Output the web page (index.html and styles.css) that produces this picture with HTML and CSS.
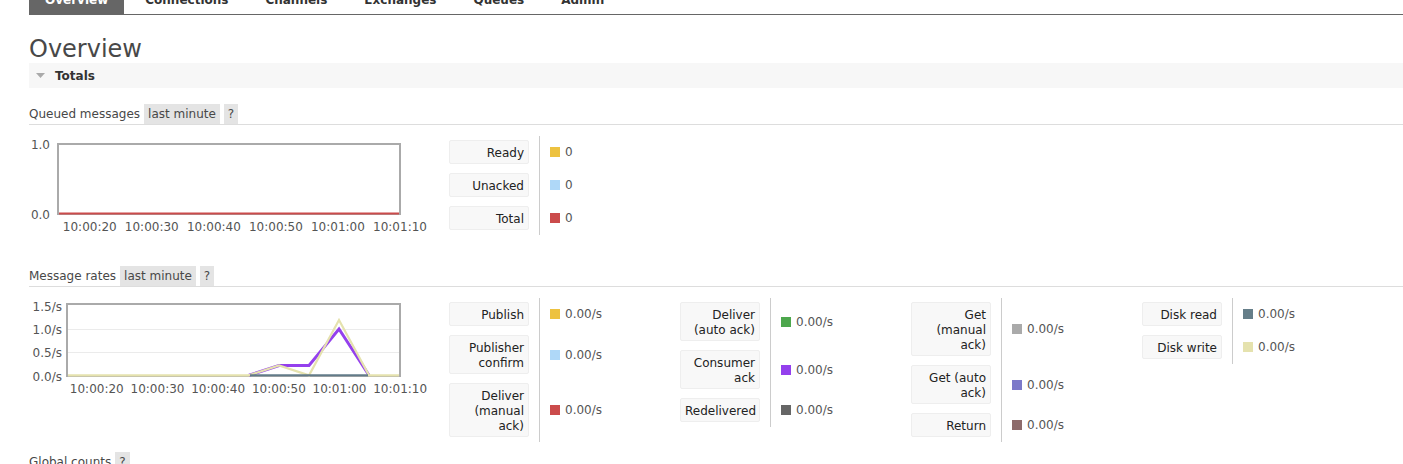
FILE: index.html
```html
<!DOCTYPE html>
<html lang="en">
<head>
<meta charset="utf-8">
<title>RabbitMQ Management - Overview</title>
<link rel="stylesheet" href="styles.css">
</head>
<body>
<div class="page">
  <ul class="nav">
    <li class="tab active">Overview</li>
    <li class="tab">Connections</li>
    <li class="tab">Channels</li>
    <li class="tab">Exchanges</li>
    <li class="tab">Queues</li>
    <li class="tab">Admin</li>
  </ul>

  <h1 class="title">Overview</h1>

  <div class="section-bar">
    <svg class="caret" width="9" height="5" viewBox="0 0 9 5"><polygon points="0,0 9,0 4.5,5" fill="#aaa"/></svg>
    <span>Totals</span>
  </div>

  <div class="block">
    <div class="block-head">
      <span>Queued messages</span>
      <span class="pill">last minute</span>
      <span class="pill">?</span>
    </div>
    <div class="block-row">
      <div class="chart">
        <svg width="420" height="110" viewBox="0 0 420 110">
          <rect x="29" y="8" width="342" height="70" fill="#fff" stroke="#aaa" stroke-width="2"/>
          <line x1="30" y1="77.5" x2="370" y2="77.5" stroke="#cb4b4b" stroke-width="2"/>
          <g class="tick">
            <text x="21" y="12.7" text-anchor="end">1.0</text>
            <text x="21" y="82.7" text-anchor="end">0.0</text>
            <text x="60.8" y="95" text-anchor="middle">10:00:20</text>
            <text x="122.8" y="95" text-anchor="middle">10:00:30</text>
            <text x="184.9" y="95" text-anchor="middle">10:00:40</text>
            <text x="246.9" y="95" text-anchor="middle">10:00:50</text>
            <text x="308.9" y="95" text-anchor="middle">10:01:00</text>
            <text x="371" y="95" text-anchor="middle">10:01:10</text>
          </g>
        </svg>
      </div>
      <div class="legends">
        <div class="legend">
          <div class="lbl">Ready</div><div class="val"><i class="sw c-ready"></i>0</div>
          <div class="lbl">Unacked</div><div class="val"><i class="sw c-unacked"></i>0</div>
          <div class="lbl">Total</div><div class="val"><i class="sw c-total"></i>0</div>
        </div>
      </div>
    </div>
  </div>

  <div class="block">
    <div class="block-head">
      <span>Message rates</span>
      <span class="pill">last minute</span>
      <span class="pill">?</span>
    </div>
    <div class="block-row">
      <div class="chart">
        <svg width="420" height="110" viewBox="0 0 420 110">
          <rect x="38" y="6" width="333" height="72" fill="#fff" stroke="#aaa" stroke-width="2"/>
          <line x1="39" y1="31.5" x2="370" y2="31.5" stroke="#ebebeb" stroke-width="1"/>
          <line x1="39" y1="54.5" x2="370" y2="54.5" stroke="#ebebeb" stroke-width="1"/>
          <polyline points="220,77.3 250,67.5 280,67.5 310,31 340,77.3" fill="none" stroke="#9440ed" stroke-width="3"/>
          <polyline points="39,77.3 220,77.3 250,67.5 280,77.3 310,22 340,77.3 370,77.3" fill="none" stroke="#e5e2ae" stroke-width="2.2"/>
          <line x1="221" y1="77.3" x2="339" y2="77.3" stroke="#627b88" stroke-width="2"/>
          <g class="tick">
            <text x="33" y="13.1" text-anchor="end">1.5/s</text>
            <text x="33" y="36.1" text-anchor="end">1.0/s</text>
            <text x="33" y="58.7" text-anchor="end">0.5/s</text>
            <text x="33" y="82.7" text-anchor="end">0.0/s</text>
            <text x="67.8" y="94.7" text-anchor="middle">10:00:20</text>
            <text x="128.5" y="94.7" text-anchor="middle">10:00:30</text>
            <text x="189.2" y="94.7" text-anchor="middle">10:00:40</text>
            <text x="249.9" y="94.7" text-anchor="middle">10:00:50</text>
            <text x="310.5" y="94.7" text-anchor="middle">10:01:00</text>
            <text x="371.2" y="94.7" text-anchor="middle">10:01:10</text>
          </g>
        </svg>
      </div>
      <div class="legends">
        <div class="legend">
          <div class="lbl">Publish</div><div class="val"><i class="sw c-ready"></i>0.00/s</div>
          <div class="lbl">Publisher<br>confirm</div><div class="val"><i class="sw c-unacked"></i>0.00/s</div>
          <div class="lbl">Deliver<br>(manual<br>ack)</div><div class="val"><i class="sw c-total"></i>0.00/s</div>
        </div>
        <div class="legend">
          <div class="lbl">Deliver<br>(auto ack)</div><div class="val"><i class="sw c-green"></i>0.00/s</div>
          <div class="lbl">Consumer<br>ack</div><div class="val"><i class="sw c-purple"></i>0.00/s</div>
          <div class="lbl">Redelivered</div><div class="val"><i class="sw c-dark"></i>0.00/s</div>
        </div>
        <div class="legend">
          <div class="lbl">Get<br>(manual<br>ack)</div><div class="val"><i class="sw c-grey"></i>0.00/s</div>
          <div class="lbl">Get (auto<br>ack)</div><div class="val"><i class="sw c-lavender"></i>0.00/s</div>
          <div class="lbl">Return</div><div class="val"><i class="sw c-brown"></i>0.00/s</div>
        </div>
        <div class="legend">
          <div class="lbl">Disk read</div><div class="val"><i class="sw c-slate"></i>0.00/s</div>
          <div class="lbl">Disk write</div><div class="val"><i class="sw c-cream"></i>0.00/s</div>
        </div>
      </div>
    </div>
  </div>

  <div class="block">
    <div class="block-head">
      <span>Global counts</span>
      <span class="pill">?</span>
    </div>
    <div class="block-row counts">
      <div class="count">Connections: 1</div>
    </div>
  </div>
</div>
</body>
</html>
```

FILE: styles.css
```css
html, body {
  margin: 0;
  padding: 0;
  background: #fff;
}

body {
  font-family: "DejaVu Sans", Verdana, sans-serif;
  font-size: 12px;
  color: #484848;
}

.page {
  padding-left: 29px;
}

.nav {
  list-style: none;
  margin: -20px 0 0;
  padding: 0;
  display: flex;
  gap: 5px;
  border-bottom: 1px solid #666;
}

.tab {
  padding: 13px 16px 7px;
  line-height: 14px;
  font-weight: bold;
  color: #333;
}

.tab.active {
  background: #666;
  color: #fff;
}

.title {
  margin: 21px 0 0;
  font-size: 24px;
  line-height: 27px;
  font-weight: normal;
  color: #484848;
}

.section-bar {
  height: 25px;
  background: #f7f7f7;
  display: flex;
  align-items: center;
  gap: 10px;
  padding-left: 7px;
  font-weight: bold;
  color: #333;
  margin-bottom: 16px;
}

.caret {
  display: block;
}

.block {
  margin-bottom: 10px;
}

.block-head {
  display: flex;
  align-items: center;
  gap: 4px;
  line-height: 20px;
  border-bottom: 1px solid #ddd;
}

.pill {
  background: #e4e4e4;
  padding: 0 4px;
}

.block-row {
  display: flex;
  align-items: flex-start;
  margin-top: 11px;
}

.chart {
  width: 420px;
  height: 120px;
  flex-shrink: 0;
}

.chart svg {
  display: block;
}

.tick text {
  font-family: "DejaVu Sans", Verdana, sans-serif;
  font-size: 12px;
  fill: #545454;
}

.legends {
  display: flex;
  align-items: flex-start;
}

.legend {
  width: 231px;
  display: grid;
  grid-template-columns: 80px auto;
  row-gap: 9px;
  padding: 4px 0 5px;
  background: linear-gradient(#ccc, #ccc) no-repeat 90px 0 / 1px 100%;
}

.lbl {
  box-sizing: border-box;
  background: #f8f8f8;
  border: 1px solid #eee;
  border-radius: 2px;
  padding: 5px 4px 2px;
  line-height: 15px;
  text-align: right;
  white-space: nowrap;
  color: #222;
}

.val {
  display: flex;
  align-items: center;
  padding-left: 21px;
  color: #555;
}

.sw {
  display: block;
  width: 10px;
  height: 10px;
  margin-right: 5px;
}

.c-ready { background: #edc240; }
.c-unacked { background: #afd8f8; }
.c-total { background: #cb4b4b; }
.c-green { background: #4da74d; }
.c-purple { background: #9440ed; }
.c-dark { background: #666666; }
.c-grey { background: #aaaaaa; }
.c-lavender { background: #7c79c9; }
.c-brown { background: #8d6b6b; }
.c-slate { background: #657e89; }
.c-cream { background: #e5e2ae; }

.counts {
  height: 40px;
}
```
